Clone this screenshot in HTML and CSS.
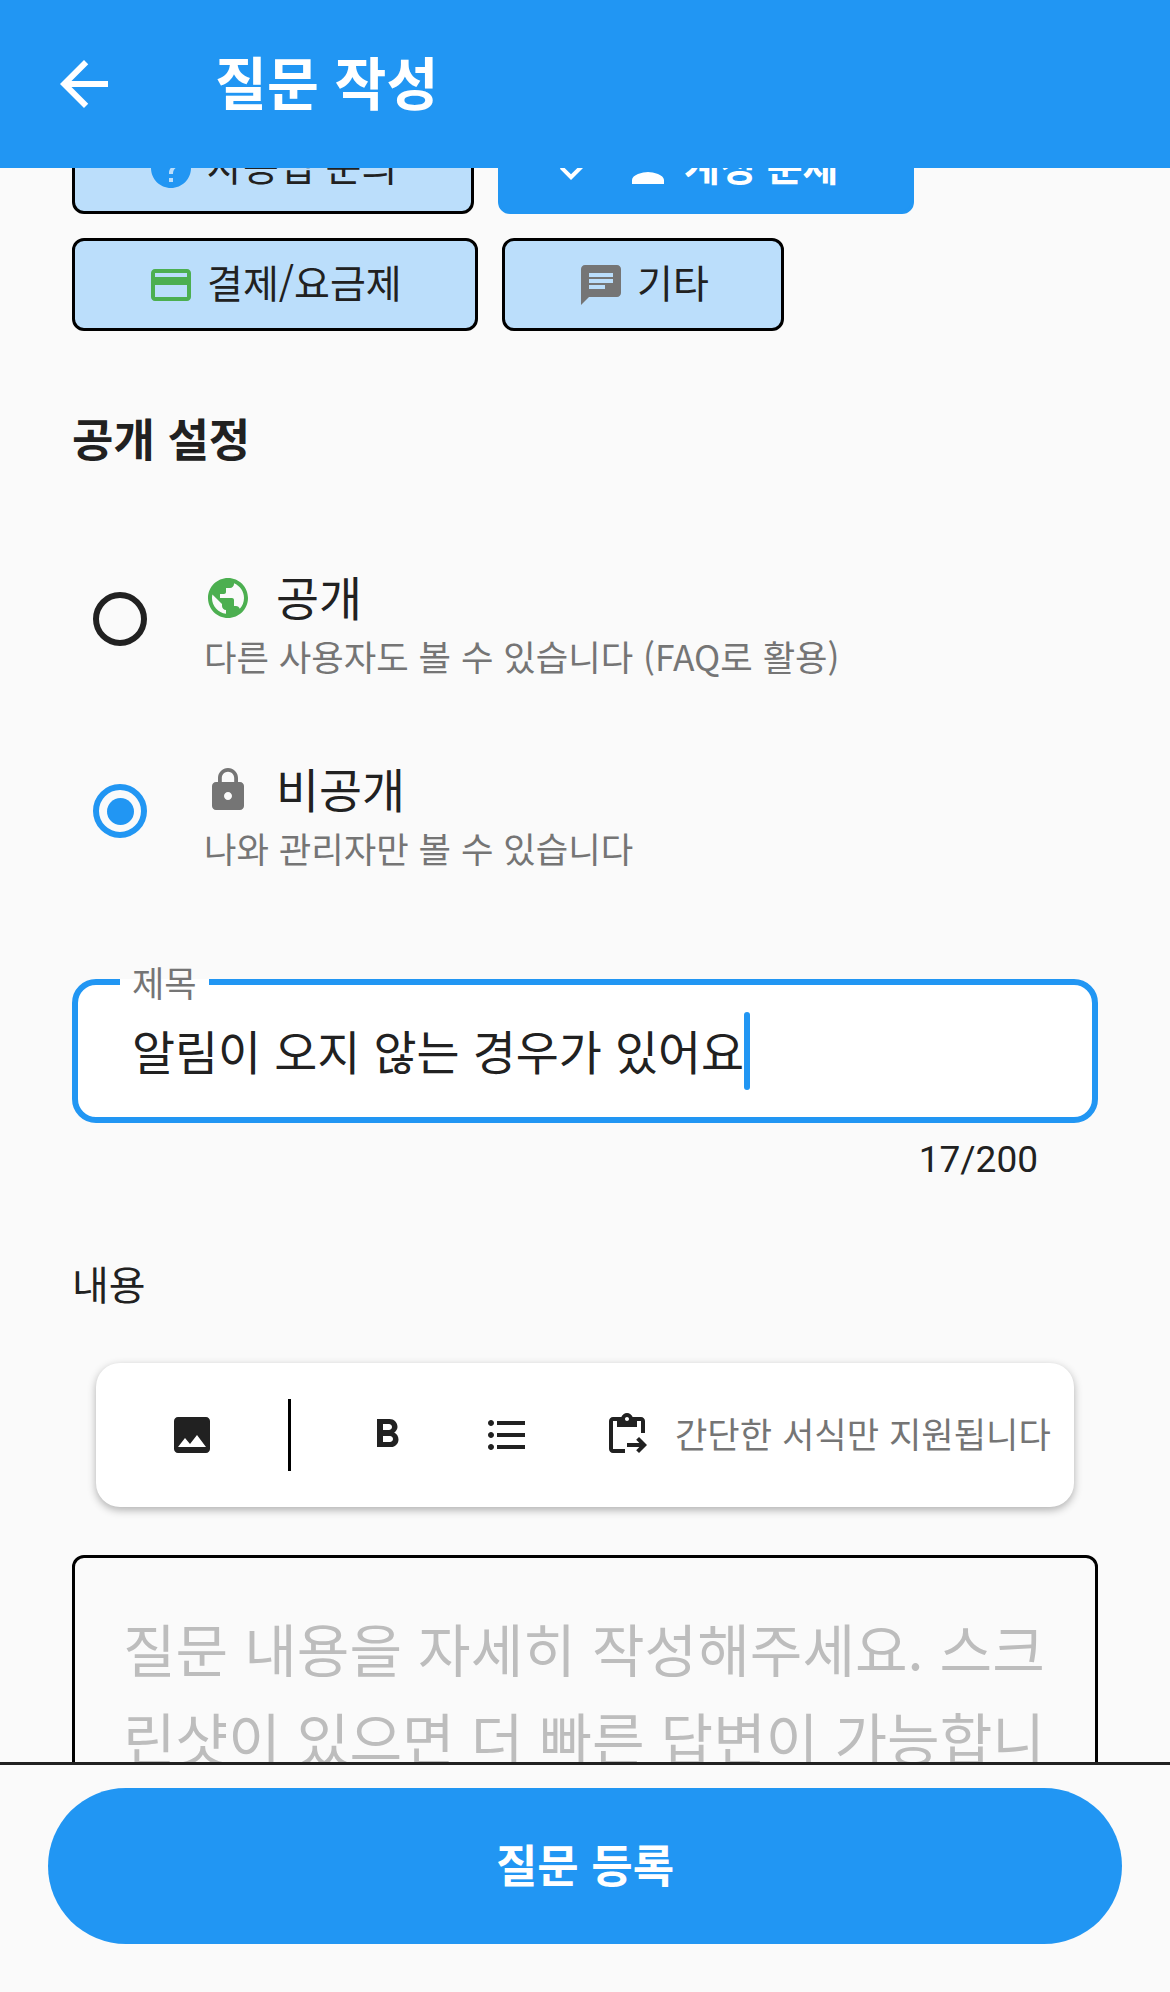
FILE: index.html
```html
<!DOCTYPE html>
<html lang="ko">
  <head>
    <meta charset="UTF-8" />
    <meta name="viewport" content="width=device-width, initial-scale=1.0"/>
    <title>질문 작성</title>
    <link rel="stylesheet" href="styles.css">
  </head>
  <body>
    <header class="appbar">
      <svg class="back" viewBox="0 0 24 24"><path d="M20 11H7.83l5.59-5.59L12 4l-8 8 8 8 1.41-1.41L7.83 13H20v-2z"/></svg>
      <h1>질문 작성</h1>
    </header>

    <main class="scroll">
      <div class="content">
        <div class="chips">
          <div class="chip chip-usage">
            <svg class="icon blue" viewBox="0 0 24 24"><path d="M12 2C6.48 2 2 6.48 2 12s4.48 10 10 10 10-4.48 10-10S17.52 2 12 2zm1 17h-2v-2h2v2zm2.07-7.75l-.9.92C13.45 12.9 13 13.5 13 15h-2v-.5c0-1.1.45-2.1 1.17-2.83l1.24-1.26c.37-.37.59-.87.59-1.41 0-1.1-.9-2-2-2s-2 .9-2 2H8c0-2.21 1.79-4 4-4s4 1.79 4 4c0 .88-.36 1.68-.93 2.25z"/></svg>
            <span>사용법 문의</span>
          </div>
          <div class="chip chip-selected">
            <svg class="icon white check" viewBox="0 0 24 24"><path d="M9 16.17L4.83 12l-1.41 1.41L9 19 21 7l-1.41-1.41z"/></svg>
            <svg class="icon white" viewBox="0 0 24 24"><path d="M12 12c2.21 0 4-1.79 4-4s-1.79-4-4-4-4 1.79-4 4 1.79 4 4 4zm0 2c-2.67 0-8 1.34-8 4v2h16v-2c0-2.66-5.33-4-8-4z"/></svg>
            <span>계정 문제</span>
          </div>
          <div class="chip chip-payment">
            <svg class="icon green" viewBox="0 0 24 24"><path d="M20 4H4c-1.11 0-1.99.89-1.99 2L2 18c0 1.11.89 2 2 2h16c1.11 0 2-.89 2-2V6c0-1.11-.89-2-2-2zm0 14H4v-6h16v6zm0-10H4V6h16v2z"/></svg>
            <span>결제/요금제</span>
          </div>
          <div class="chip chip-other">
            <svg class="icon gray" viewBox="0 0 24 24"><path d="M20 2H4c-1.1 0-1.99.9-1.99 2L2 22l4-4h14c1.1 0 2-.9 2-2V4c0-1.1-.9-2-2-2zM6 9h12v2H6V9zm8 5H6v-2h8v2zm4-6H6V6h12v2z"/></svg>
            <span>기타</span>
          </div>
        </div>

        <h2 class="section-title">공개 설정</h2>

        <div class="radio-row">
          <span class="radio"></span>
          <div class="radio-text">
            <div class="radio-title">
              <svg class="icon green" viewBox="0 0 24 24"><path d="M12 2C6.48 2 2 6.48 2 12s4.48 10 10 10 10-4.48 10-10S17.52 2 12 2zm-1 17.93c-3.95-.49-7-3.85-7-7.93 0-.62.08-1.21.21-1.79L9 15v1c0 1.1.9 2 2 2v1.93zm6.9-2.54c-.26-.81-1-1.39-1.9-1.39h-1v-3c0-.55-.45-1-1-1H8v-2h2c.55 0 1-.45 1-1V7h2c1.1 0 2-.9 2-2v-.41c2.93 1.19 5 4.06 5 7.41 0 2.08-.8 3.97-2.1 5.39z"/></svg>
              <span>공개</span>
            </div>
            <div class="radio-sub">다른 사용자도 볼 수 있습니다 (FAQ로 활용)</div>
          </div>
        </div>
        <div class="radio-row">
          <span class="radio radio-on"></span>
          <div class="radio-text">
            <div class="radio-title">
              <svg class="icon gray" viewBox="0 0 24 24"><path d="M18 8h-1V6c0-2.76-2.24-5-5-5S7 3.24 7 6v2H6c-1.1 0-2 .9-2 2v10c0 1.1.9 2 2 2h12c1.1 0 2-.9 2-2V10c0-1.1-.9-2-2-2zm-6 9c-1.1 0-2-.9-2-2s.9-2 2-2 2 .9 2 2-.9 2-2 2zm3.1-9H8.9V6c0-1.71 1.39-3.1 3.1-3.1 1.71 0 3.1 1.39 3.1 3.1v2z"/></svg>
              <span>비공개</span>
            </div>
            <div class="radio-sub">나와 관리자만 볼 수 있습니다</div>
          </div>
        </div>

        <div class="field">
          <label class="field-label">제목</label>
          <span class="field-value">알림이 오지 않는 경우가 있어요</span><span class="caret"></span>
        </div>
        <div class="counter">17/200</div>

        <div class="content-label">내용</div>

        <div class="toolbar">
          <svg class="icon dark tool-image" viewBox="0 0 24 24"><path d="M21 19V5c0-1.1-.9-2-2-2H5c-1.1 0-2 .9-2 2v14c0 1.1.9 2 2 2h14c1.1 0 2-.9 2-2zM8.5 13.5l2.5 3.01L14.5 12l4.5 6H5l3.5-4.5z"/></svg>
          <span class="tool-divider"></span>
          <svg class="icon dark tool-bold" viewBox="0 0 24 24"><path d="M15.6 10.79c.97-.67 1.65-1.77 1.65-2.79 0-2.26-1.75-4-4-4H7v14h7.04c2.09 0 3.71-1.7 3.71-3.79 0-1.52-.86-2.82-2.15-3.42zM10 6.5h3c.83 0 1.5.67 1.5 1.5s-.67 1.5-1.5 1.5h-3v-3zm3.5 9H10v-3h3.5c.83 0 1.5.67 1.5 1.5s-.67 1.5-1.5 1.5z"/></svg>
          <svg class="icon dark tool-list" viewBox="0 0 24 24"><path d="M4 10.5c-.83 0-1.5.67-1.5 1.5s.67 1.5 1.5 1.5 1.5-.67 1.5-1.5-.67-1.5-1.5-1.5zm0-6c-.83 0-1.5.67-1.5 1.5S3.17 7.5 4 7.5 5.5 6.83 5.5 6 4.83 4.5 4 4.5zm0 12c-.83 0-1.5.68-1.5 1.5s.68 1.5 1.5 1.5 1.5-.68 1.5-1.5-.67-1.5-1.5-1.5zM7 19h14v-2H7v2zm0-6h14v-2H7v2zm0-8v2h14V5H7z"/></svg>
          <svg class="icon dark tool-paste" viewBox="0 0 24 24"><path d="M5 5h2v3h10V5h2v6h2V5c0-1.1-.9-2-2-2h-4.18C14.4 1.84 13.3 1 12 1S9.6 1.84 9.18 3H5C3.9 3 3 3.9 3 5v14c0 1.1.9 2 2 2h6v-2H5V5zm7-2c.55 0 1 .45 1 1s-.45 1-1 1-1-.45-1-1 .45-1 1-1z"/><path d="M18.01 13l-1.42 1.41 1.58 1.59H12v2h6.17l-1.58 1.59L18.01 21 22 17z"/></svg>
          <span class="tool-hint">간단한 서식만 지원됩니다</span>
        </div>

        <div class="textarea">질문 내용을 자세히 작성해주세요. 스크린샷이 있으면 더 빠른 답변이 가능합니다.</div>
      </div>
    </main>

    <footer class="bottom">
      <button class="submit">질문 등록</button>
    </footer>
  </body>
</html>
```

FILE: styles.css
```css
* {
  box-sizing: border-box;
  margin: 0;
  padding: 0;
}

body {
  font-family: "Noto Sans CJK KR", "Noto Sans", sans-serif;
  background-color: #fafafa;
  color: #212121;
  display: flex;
  flex-direction: column;
  height: 1992px;
  overflow: hidden;
}

.icon {
  width: 48px;
  height: 48px;
  flex-shrink: 0;
  display: block;
}

.blue { fill: #2196f3; }
.white { fill: #fff; }
.green { fill: #4caf50; }
.gray { fill: #757575; }
.dark { fill: #212121; }

.appbar {
  height: 168px;
  background-color: #2196f3;
  display: flex;
  align-items: center;
  flex-shrink: 0;
  position: relative;
  z-index: 1;
}

.back {
  width: 72px;
  height: 72px;
  margin-left: 48px;
  fill: #fff;
}

.appbar h1 {
  margin-left: 95px;
  margin-bottom: 5px;
  font-size: 56.4px;
  font-weight: 700;
  line-height: 1;
  color: #fff;
}

/* page is scrolled a bit, first chip row goes under the app bar */
.scroll {
  flex: 1;
  min-height: 0;
  overflow: hidden;
}

.content {
  margin-top: -47px;
  padding: 0 72px;
}

.chips {
  display: flex;
  flex-wrap: wrap;
  gap: 24px;
}

.chip {
  height: 93px;
  display: flex;
  align-items: center;
  gap: 12px;
  background-color: #bbdefb;
  border: 3px solid #000;
  border-radius: 12px;
  font-size: 39px;
}

.chip span {
  margin-bottom: 7px;
}

.chip-usage { width: 402px; padding-left: 72px; }
.chip-payment { width: 406px; padding-left: 72px; }
.chip-other { width: 282px; padding-left: 72px; }

.chip-selected {
  width: 416px;
  padding-left: 52px;
  gap: 0;
  background-color: #2196f3;
  border-color: #2196f3;
  color: #fff;
  font-weight: 700;
}

.chip-selected .check {
  margin-right: 23px;
  margin-top: -4px;
}

.chip-selected span {
  margin-left: 12px;
}

.section-title {
  margin-top: 79px;
  height: 56px;
  line-height: 56px;
  margin-bottom: 57px;
  font-size: 45px;
  font-weight: 700;
}

.radio-row {
  height: 192px;
  display: flex;
  align-items: center;
  padding-left: 21px;
}

.radio {
  width: 54px;
  height: 54px;
  border: 6px solid #212121;
  border-radius: 50%;
  flex-shrink: 0;
  display: flex;
  align-items: center;
  justify-content: center;
}

.radio-on {
  border-color: #2196f3;
}

.radio-on::after {
  content: "";
  width: 27px;
  height: 27px;
  border-radius: 50%;
  background-color: #2196f3;
}

.radio-text {
  margin-left: 57px;
  padding-top: 12px;
}

.radio-title {
  display: flex;
  align-items: center;
  gap: 24px;
  height: 54px;
  font-size: 46.8px;
}

.radio-title span {
  margin-bottom: 5px;
}

.radio-sub {
  margin-top: 7px;
  font-size: 35.3px;
  line-height: 48px;
  color: #757575;
}

.field {
  position: relative;
  margin-top: 72px;
  height: 144px;
  background-color: #fff;
  border: 6px solid #2196f3;
  border-radius: 24px;
  padding-left: 54px;
  display: flex;
  align-items: center;
  font-size: 46.8px;
}

.field-value {
  margin-bottom: 4px;
}

.field-label {
  position: absolute;
  left: 42px;
  top: -24px;
  padding: 0 12px;
  font-size: 35.2px;
  line-height: 42px;
  color: #757575;
  background: linear-gradient(#fafafa 18px, #fff 18px);
}

.caret {
  width: 6px;
  height: 78px;
  border-radius: 3px;
  background-color: #2196f3;
}

.counter {
  margin-top: 17px;
  padding-right: 60px;
  text-align: right;
  font-family: Roboto, "Noto Sans CJK KR", sans-serif;
  font-size: 37px;
  line-height: 40px;
}

.content-label {
  margin-top: 73px;
  font-size: 40px;
  line-height: 60px;
}

.toolbar {
  margin: 50px 24px 0;
  height: 144px;
  display: flex;
  align-items: center;
  background-color: #fff;
  border-radius: 24px;
  box-shadow: 0 3px 9px rgba(0, 0, 0, 0.3);
}

.tool-image { margin-left: 72px; }

.tool-divider {
  width: 3px;
  height: 72px;
  margin-left: 72px;
  background-color: #000;
}

.tool-bold { margin-left: 72px; }
.tool-list { margin-left: 72px; }
.tool-paste { margin-left: 72px; }

.tool-hint {
  margin-left: 24px;
  margin-bottom: 6px;
  font-size: 35.2px;
  color: #757575;
  white-space: nowrap;
}

.textarea {
  margin-top: 48px;
  height: 400px;
  border: 3px solid #000;
  border-radius: 12px;
  padding: 45px 48px;
  font-size: 57.2px;
  line-height: 89px;
  color: #bdbdbd;
}

.bottom {
  height: 230px;
  flex-shrink: 0;
  border-top: 3px solid #212121;
  padding: 23px 48px 0;
}

.submit {
  width: 100%;
  height: 156px;
  padding-bottom: 5px;
  border: none;
  border-radius: 78px;
  background-color: #2196f3;
  color: #fff;
  font-family: inherit;
  font-size: 45px;
  font-weight: 700;
}
```
